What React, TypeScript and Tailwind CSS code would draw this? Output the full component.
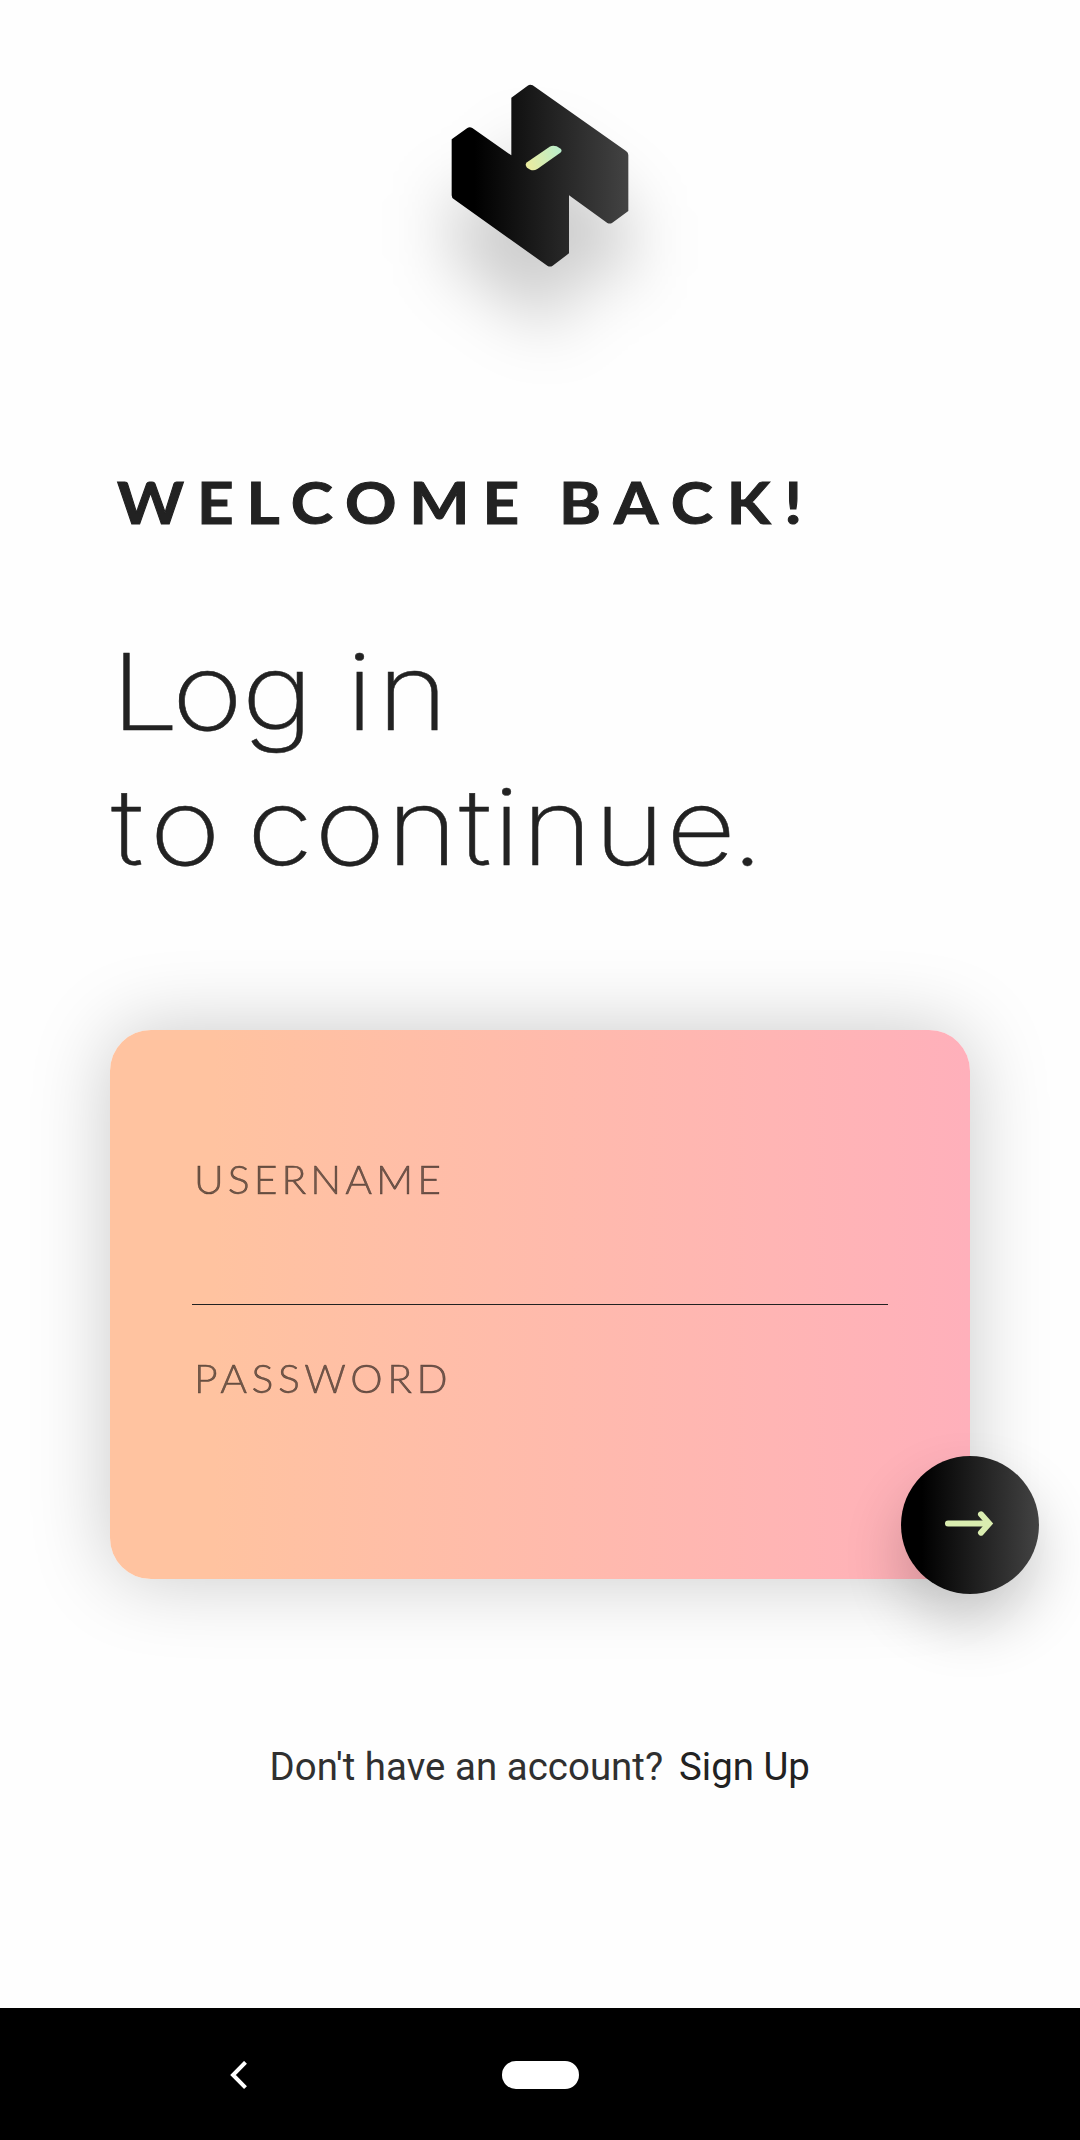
import React from "react";

function Logo() {
  return (
    <svg className="h-[184px] w-[178px] overflow-visible" viewBox="213 102 534 552" fill="none">
      <defs>
        <linearGradient id="logo-body" x1="215" x2="745" y1="0" y2="0" gradientUnits="userSpaceOnUse">
          <stop offset="0.13" stopColor="#000" />
          <stop offset="1" stopColor="#434343" />
        </linearGradient>
        <linearGradient id="logo-pill" x1="440" x2="542" y1="340" y2="305" gradientUnits="userSpaceOnUse">
          <stop stopColor="#eaec9f" />
          <stop offset="1" stopColor="#baedca" />
        </linearGradient>
        <filter id="logo-shadow" x="-100%" y="-100%" width="300%" height="300%" colorInterpolationFilters="sRGB">
          <feGaussianBlur stdDeviation="100" />
        </filter>
      </defs>
      <path
        d="M215 268L262 234Q269 230 277 234L394 316V143L443 107Q450 102 458 106L738 303Q745 308 745 315V483L697 518Q690 523 682 519L567 436V610L518 647Q511 652 503 648L222 448Q215 444 215 436Z"
        fill="#000"
        fillOpacity="0.2"
        filter="url(#logo-shadow)"
        transform="translate(0 180)"
      />
      <path
        d="M215 268L262 234Q269 230 277 234L394 316V143L443 107Q450 102 458 106L738 303Q745 308 745 315V483L697 518Q690 523 682 519L567 436V610L518 647Q511 652 503 648L222 448Q215 444 215 436Z"
        fill="url(#logo-body)"
      />
      <path
        d="M441 337L509 290Q518 285 530 289L542 296Q548 301 541 308L472 357Q461 363 451 359L441 353Q433 344 441 337Z"
        fill="url(#logo-pill)"
      />
    </svg>
  );
}

export default function App() {
  return (
    <div className="flex h-[2140px] w-[1080px] flex-col overflow-hidden bg-[#fefefe] text-[#222]">
      <header className="flex h-[467px] justify-center pt-[84px]">
        <Logo />
      </header>

      <h1 className="flex h-[157px] pl-[117px] font-['Lato',sans-serif] text-[58px] leading-[70px] font-bold [-webkit-text-stroke:1px_#222]">
        <span className="w-[442px] origin-left scale-x-110 tracking-[11.7px]">WELCOME</span>
        <span className="origin-left scale-x-110 tracking-[12.5px]">BACK!</span>
      </h1>

      <div className="h-[405.5px] pl-[111px] font-['Inter',sans-serif] text-[106px] leading-[135px] font-extralight [-webkit-text-stroke:0.5px_#222]">
        <p className="flex">
          <span className="w-[234.5px] origin-left scale-x-114 tracking-[-1px]">
            <span className="tracking-[-6.2px]">L</span>og
          </span>
          <span className="origin-left scale-x-114 tracking-[3.6px]">in</span>
        </p>
        <p className="flex">
          <span className="w-[135.5px] origin-left scale-x-114 tracking-[6.1px]">to</span>
          <span className="origin-left scale-x-114 tracking-[1.27px]">
            continu<span className="tracking-[-4.5px]">e</span>.
          </span>
        </p>
      </div>

      <form className="relative ml-[110px] h-[549.5px] w-[860px] rounded-[41px] bg-linear-to-r/srgb from-[#ffc3a0] from-12% to-[#ffb0bb] px-[82px] pt-[126.5px] font-['Lato',sans-serif] text-[39px] leading-[47px] font-light text-black/54 shadow-[0_0_80px_rgba(0,0,0,0.21)]">
        <div className="h-[148.5px] border-b-[1.5px] border-[#222]">
          <label className="ml-[2px] block w-fit origin-left scale-x-105 tracking-[3.8px] [-webkit-text-stroke:0.5px_rgba(0,0,0,0.54)]">USERNAME</label>
        </div>
        <label className="mt-[50px] ml-[2px] block w-fit origin-left scale-x-105 tracking-[4.3px] [-webkit-text-stroke:0.5px_rgba(0,0,0,0.54)]">PASSWORD</label>
        <button
          type="button"
          className="absolute -right-[69px] -bottom-[15px] flex size-[138px] items-center justify-center rounded-full bg-linear-to-r/srgb from-black from-15% to-[#434343] shadow-[0_30px_60px_rgba(0,0,0,0.2)]"
        >
          <svg className="mr-[2px] mb-[3px] h-[27px] w-[51px]" viewBox="312 331.5 153 81" fill="none" stroke="#daedb0" strokeWidth="18" strokeLinecap="round">
            <path d="M324 372H440" />
            <path d="M423 344.5L447.500 372L423 399.500" />
          </svg>
        </button>
      </form>

      <p className="flex h-[429px] pt-[165px] pl-[269.5px] font-['Roboto',sans-serif] text-[38.4px] leading-[45px]">
        <span className="w-[409.5px] tracking-[0.04px] text-[#303030]">Don't have an account?</span>
        <a className="text-[#222]">Sign Up</a>
      </p>

      <nav className="flex h-[132px] bg-black pt-[52.5px]">
        <svg className="ml-[229px] h-[29px] w-[20px]" viewBox="0 0 20 29" fill="none" stroke="#fff" strokeWidth="4">
          <path d="M16.500 1.300L4 14L16.500 26.700" />
        </svg>
        <div className="ml-[253px] h-[28px] w-[77px] rounded-full bg-white" />
      </nav>
    </div>
  );
}
